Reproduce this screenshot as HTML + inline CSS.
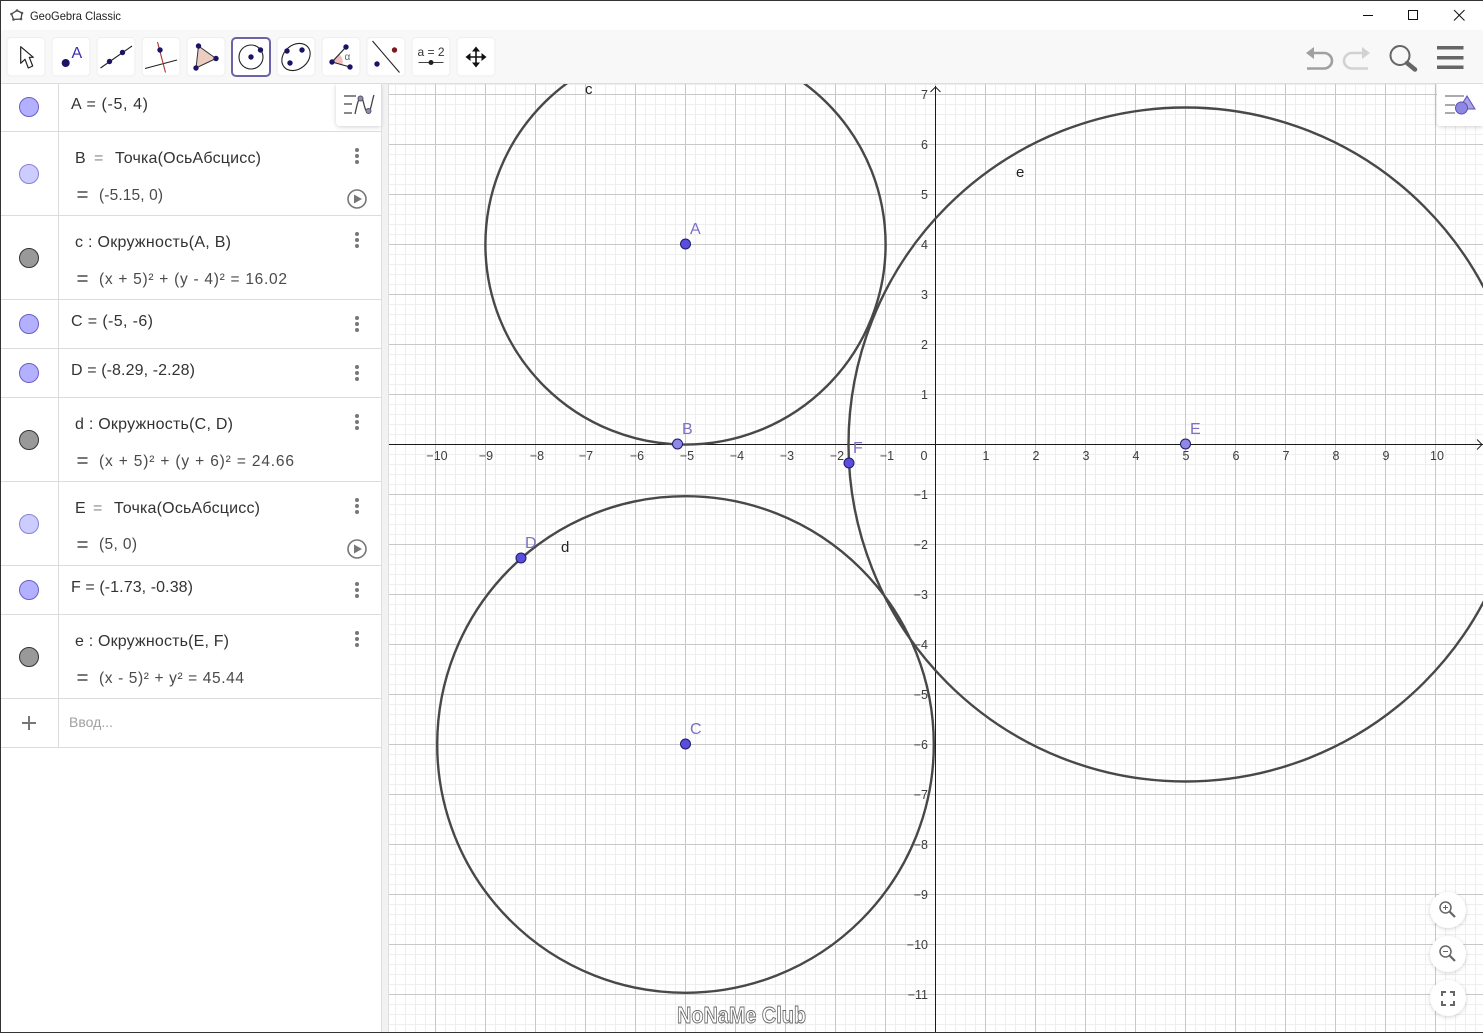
<!DOCTYPE html>
<html><head><meta charset="utf-8"><title>GeoGebra Classic</title>
<style>
html,body{margin:0;padding:0;background:#fff;width:1483px;height:1033px;overflow:hidden}
svg{display:block;font-family:"Liberation Sans","Noto Sans CJK SC",sans-serif}
.ax text{font-size:12.5px;fill:#3c3c3c}
.xl text{text-anchor:middle}
.yl text{text-anchor:end}
.pl text{font-size:16px;fill:#7a70c4}
.ol text{font-size:15px;fill:#222}
.t1 text{font-size:16px;fill:#333}
.t2 text{font-size:15.5px;fill:#4a4a4a}
.eq rect{fill:#777}
.k circle{fill:#777}
.pt circle{fill:#5a4de0;stroke:#1f1a66;stroke-width:1}
.tb rect{fill:#fff;stroke:#eeeeee;stroke-width:1}
.d{fill:#1a1464}
</style></head><body>
<svg width="1483" height="1033" viewBox="0 0 1483 1033" xmlns="http://www.w3.org/2000/svg">
<defs>
<pattern id="mi" patternUnits="userSpaceOnUse" x="5" y="4" width="10" height="10"><rect width="1" height="10" fill="#eeeeee"/><rect width="10" height="1" fill="#eeeeee"/></pattern>
<pattern id="ma" patternUnits="userSpaceOnUse" x="35" y="44" width="50" height="50"><rect width="1" height="50" fill="#c8c8c8"/><rect width="50" height="1" fill="#c8c8c8"/></pattern>
<filter id="sh" x="-30%" y="-30%" width="160%" height="160%"><feDropShadow dx="0" dy="1" stdDeviation="2" flood-color="#000" flood-opacity=".18"/></filter>
</defs>
<rect width="1483" height="1033" fill="#fff"/>
<!-- graphics -->
<rect x="389" y="84" width="1094" height="949" fill="url(#mi)"/>
<rect x="389" y="84" width="1094" height="949" fill="url(#ma)"/>
<rect x="389" y="444" width="1094" height="1" fill="#1a1a1a"/>
<rect x="935" y="86" width="1" height="947" fill="#1a1a1a"/>
<path d="M930.500 92L935.500 87L940.500 92" fill="none" stroke="#222" stroke-width="1"/>
<path d="M1477 439.500L1482 444.500L1477 449.500" fill="none" stroke="#222" stroke-width="1"/>
<g class="ax xl">
<text x="437" y="460">−10</text><text x="486" y="460">−9</text><text x="537" y="460">−8</text><text x="586" y="460">−7</text><text x="637" y="460">−6</text><text x="687" y="460">−5</text><text x="737" y="460">−4</text><text x="787" y="460">−3</text><text x="837" y="460">−2</text><text x="887" y="460">−1</text><text x="924" y="460">0</text><text x="986" y="460">1</text><text x="1036" y="460">2</text><text x="1086" y="460">3</text><text x="1136" y="460">4</text><text x="1186" y="460">5</text><text x="1236" y="460">6</text><text x="1286" y="460">7</text><text x="1336" y="460">8</text><text x="1386" y="460">9</text><text x="1437" y="460">10</text>
</g>
<g class="ax yl">
<text x="928" y="99">7</text><text x="928" y="149">6</text><text x="928" y="199">5</text><text x="928" y="249">4</text><text x="928" y="299">3</text><text x="928" y="349">2</text><text x="928" y="399">1</text><text x="928" y="499">−1</text><text x="928" y="549">−2</text><text x="928" y="599">−3</text><text x="928" y="649">−4</text><text x="928" y="699">−5</text><text x="928" y="749">−6</text><text x="928" y="799">−7</text><text x="928" y="849">−8</text><text x="928" y="899">−9</text><text x="928" y="949">−10</text><text x="928" y="999">−11</text>
</g>
<svg x="389" y="84" width="1094" height="949" viewBox="389 84 1094 949">
<g fill="none" stroke="#484848" stroke-width="2.400">
<circle cx="685.500" cy="244.500" r="200.100"/>
<circle cx="685.500" cy="744.500" r="248.300"/>
<circle cx="1185.500" cy="444.500" r="337"/>
</g></svg>
<g class="ol"><text x="585" y="94">c</text><text x="1016" y="177">e</text><text x="561" y="552">d</text></g>
<g class="pl"><text x="690" y="234">A</text><text x="682" y="434">B</text><text x="690" y="734">C</text><text x="525" y="548">D</text><text x="1190" y="434">E</text><text x="853" y="453">F</text></g>
<g class="pt">
<circle cx="685.500" cy="244" r="5"/><circle cx="677.500" cy="444" r="5" style="fill:#8f88e8"/><circle cx="685.500" cy="744" r="5"/><circle cx="521" cy="558" r="5"/><circle cx="1185.500" cy="444" r="5" style="fill:#8f88e8"/><circle cx="849" cy="463" r="5"/>
</g>
<!-- watermark -->
<text x="677" y="1023" font-size="23" font-weight="bold" fill="#fff" stroke="#666" stroke-width=".9" textLength="129" lengthAdjust="spacingAndGlyphs">NoNaMe Club</text>
<!-- zoom buttons -->
<g filter="url(#sh)" fill="#fff"><circle cx="1448" cy="910" r="18"/><circle cx="1448" cy="954" r="18"/><circle cx="1448" cy="998" r="18"/></g>
<g fill="none" stroke="#666" stroke-width="1.500">
<circle cx="1445.500" cy="907.500" r="5.500"/><path d="M1449.500 911.500L1455 917" stroke-width="2.200"/><path d="M1443 907.500h5M1445.500 905v5" stroke-width="1"/>
<circle cx="1445.500" cy="951.500" r="5.500"/><path d="M1449.500 955.500L1455 961" stroke-width="2.200"/><path d="M1443 951.500h5" stroke-width="1"/>
<path d="M1442 996v-4h4M1450 992h4v4M1454 1001v4h-4M1446 1005h-4v-4" stroke-width="2"/>
</g>
<!-- graphics stylebar -->
<path d="M1437 84h46v42h-42a4 4 0 0 1-4-4z" fill="#fff" filter="url(#sh)"/>
<g fill="#aaa"><rect x="1445" y="95" width="19" height="2"/><rect x="1445" y="104" width="10" height="2"/><rect x="1445" y="112" width="10" height="2"/></g>
<path d="M1467 96L1475 109H1459Z" fill="#a9a3e6" stroke="#5b50b8"/>
<circle cx="1461.500" cy="108" r="6" fill="#8f88e0" stroke="#5b50b8"/>
<!-- splitter -->
<rect x="382" y="84" width="6" height="949" fill="#f2f2f2"/>
<rect x="388" y="84" width="1" height="949" fill="#dedede"/>
<rect x="381" y="84" width="1" height="949" fill="#dedede"/>
<!-- algebra rows -->
<g fill="#dcdcdc">
<rect x="1" y="131" width="380" height="1"/><rect x="1" y="215" width="380" height="1"/><rect x="1" y="299" width="380" height="1"/><rect x="1" y="348" width="380" height="1"/><rect x="1" y="397" width="380" height="1"/><rect x="1" y="481" width="380" height="1"/><rect x="1" y="565" width="380" height="1"/><rect x="1" y="614" width="380" height="1"/><rect x="1" y="698" width="380" height="1"/><rect x="1" y="747" width="380" height="1"/>
<rect x="58" y="84" width="1" height="664"/>
</g>
<g stroke-width="1">
<circle cx="29" cy="107" r="9.500" fill="#b3b0ff" stroke="#6a60c8"/>
<circle cx="29" cy="174" r="9.500" fill="#ccccff" stroke="#8a80d8"/>
<circle cx="29" cy="258" r="9.500" fill="#999" stroke="#333"/>
<circle cx="29" cy="324" r="9.500" fill="#b3b0ff" stroke="#6a60c8"/>
<circle cx="29" cy="373" r="9.500" fill="#b3b0ff" stroke="#6a60c8"/>
<circle cx="29" cy="440" r="9.500" fill="#999" stroke="#333"/>
<circle cx="29" cy="524" r="9.500" fill="#ccccff" stroke="#8a80d8"/>
<circle cx="29" cy="590" r="9.500" fill="#b3b0ff" stroke="#6a60c8"/>
<circle cx="29" cy="657" r="9.500" fill="#999" stroke="#333"/>
</g>
<path d="M22 723h14M29 716v14" stroke="#777" stroke-width="2" fill="none"/>
<g class="t1">
<text x="71" y="109" textLength="77">A = (-5, 4)</text>
<text x="75" y="163">B</text><text x="94" y="163" style="fill:#888">=</text><text x="115" y="163" textLength="146">Точка(ОсьАбсцисс)</text>
<text x="75" y="247" textLength="156">c : Окружность(A, B)</text>
<text x="71" y="326" textLength="82">C = (-5, -6)</text>
<text x="71" y="375" textLength="124">D = (-8.29, -2.28)</text>
<text x="75" y="429" textLength="158">d : Окружность(C, D)</text>
<text x="75" y="513">E</text><text x="93" y="513" style="fill:#888">=</text><text x="114" y="513" textLength="146">Точка(ОсьАбсцисс)</text>
<text x="71" y="592" textLength="122">F = (-1.73, -0.38)</text>
<text x="75" y="646" textLength="154">e : Окружность(E, F)</text>
</g>
<g class="t2">
<text x="99" y="200" textLength="64">(-5.15, 0)</text>
<text x="99" y="284" textLength="188">(x + 5)² + (y - 4)² = 16.02</text>
<text x="99" y="466" textLength="195">(x + 5)² + (y + 6)² = 24.66</text>
<text x="99" y="549" textLength="38">(5, 0)</text>
<text x="99" y="683" textLength="145">(x - 5)² + y² = 45.44</text>
</g>
<text x="69" y="727" font-size="14" fill="#a0a0a0" textLength="44">Ввод...</text>
<g class="eq">
<rect x="77.500" y="191" width="10" height="2"/><rect x="77.500" y="196" width="10" height="2"/>
<rect x="77.500" y="275" width="10" height="2"/><rect x="77.500" y="280" width="10" height="2"/>
<rect x="77.500" y="457" width="10" height="2"/><rect x="77.500" y="462" width="10" height="2"/>
<rect x="77.500" y="541" width="10" height="2"/><rect x="77.500" y="546" width="10" height="2"/>
<rect x="77.500" y="674" width="10" height="2"/><rect x="77.500" y="679" width="10" height="2"/>
</g>
<g class="k">
<circle cx="357" cy="150" r="2"/><circle cx="357" cy="156" r="2"/><circle cx="357" cy="162" r="2"/>
<circle cx="357" cy="234" r="2"/><circle cx="357" cy="240" r="2"/><circle cx="357" cy="246" r="2"/>
<circle cx="357" cy="318" r="2"/><circle cx="357" cy="324" r="2"/><circle cx="357" cy="330" r="2"/>
<circle cx="357" cy="367" r="2"/><circle cx="357" cy="373" r="2"/><circle cx="357" cy="379" r="2"/>
<circle cx="357" cy="416" r="2"/><circle cx="357" cy="422" r="2"/><circle cx="357" cy="428" r="2"/>
<circle cx="357" cy="500" r="2"/><circle cx="357" cy="506" r="2"/><circle cx="357" cy="512" r="2"/>
<circle cx="357" cy="584" r="2"/><circle cx="357" cy="590" r="2"/><circle cx="357" cy="596" r="2"/>
<circle cx="357" cy="633" r="2"/><circle cx="357" cy="639" r="2"/><circle cx="357" cy="645" r="2"/>
</g>
<g fill="none" stroke="#777" stroke-width="1.600"><circle cx="357" cy="199" r="9"/><circle cx="357" cy="549" r="9"/></g>
<path d="M354 194.500L362 199L354 203.500ZM354 544.500L362 549L354 553.500Z" fill="#777"/>
<!-- algebra stylebar -->
<path d="M336 84h45v42h-41a4 4 0 0 1-4-4z" fill="#fff" filter="url(#sh)"/>
<rect x="381" y="84" width="1" height="48" fill="#dedede"/>
<g fill="#888"><rect x="344" y="95" width="12" height="2"/><rect x="344" y="103" width="8" height="2"/><rect x="344" y="112" width="8" height="2"/></g>
<path d="M355 114C358 100 359 98 361 98C364 98 364 112 368 112C371 112 372 100 374 95" fill="none" stroke="#444" stroke-width="1.300"/>
<circle cx="360.500" cy="98.500" r="2.500" fill="#8f88c8" stroke="#555"/><circle cx="368.500" cy="111" r="2.500" fill="#8f88c8" stroke="#555"/>
<!-- toolbar -->
<rect x="0" y="0" width="1483" height="30" fill="#fff"/>
<rect x="0" y="30" width="1483" height="53" fill="#f8f8f8"/>
<rect x="0" y="83" width="1483" height="1" fill="#dddddd"/>
<g class="tb">
<rect x="7" y="37.500" width="38" height="38.500" rx="4"/><rect x="52" y="37.500" width="38" height="38.500" rx="4"/><rect x="97" y="37.500" width="38" height="38.500" rx="4"/><rect x="142" y="37.500" width="38" height="38.500" rx="4"/><rect x="187" y="37.500" width="38" height="38.500" rx="4"/>
<rect x="277" y="37.500" width="38" height="38.500" rx="4"/><rect x="322" y="37.500" width="38" height="38.500" rx="4"/><rect x="367" y="37.500" width="38" height="38.500" rx="4"/><rect x="412" y="37.500" width="38" height="38.500" rx="4"/><rect x="457" y="37.500" width="38" height="38.500" rx="4"/>
</g>
<rect x="232" y="38" width="38" height="38" rx="4" fill="#fff" stroke="#6a63a8" stroke-width="2"/>
<!-- icons -->
<path d="M20.700 46.700V63.300L25 59.300L28.300 68L32.700 66L29.300 57.300H33.300Z" fill="#fff" stroke="#222" stroke-width="1.200" stroke-linejoin="round"/>
<circle class="d" cx="65.700" cy="63" r="4"/>
<text x="71.500" y="58" font-size="16" fill="#3a2fb0">A</text>
<path d="M100.500 68L132 46" stroke="#222" stroke-width="1.100"/>
<circle class="d" cx="109.500" cy="61.500" r="2.700"/><circle class="d" cx="122.500" cy="52.500" r="2.700"/>
<path d="M145 68.500L177 60" stroke="#222" stroke-width="1.100"/>
<path d="M157.500 42L165.500 72.500" stroke="#a33" stroke-width="1.100"/>
<circle class="d" cx="160" cy="50" r="2.700"/>
<path d="M198.500 46L216 58.500L196 68Z" fill="#eccdc2" stroke="#333" stroke-width="1"/>
<circle class="d" cx="198.500" cy="46" r="2.700"/><circle class="d" cx="216" cy="58.500" r="2.700"/><circle class="d" cx="196" cy="68" r="2.700"/>
<circle cx="251" cy="57" r="12" fill="none" stroke="#222" stroke-width="1.100"/>
<circle class="d" cx="251" cy="57" r="2.700"/><circle class="d" cx="260.500" cy="50" r="2.700"/>
<ellipse cx="296" cy="57" rx="15.500" ry="12" transform="rotate(-40 296 57)" fill="none" stroke="#222" stroke-width="1.100"/>
<circle class="d" cx="287" cy="51" r="2.700"/><circle class="d" cx="302" cy="50" r="2.700"/><circle class="d" cx="290" cy="63" r="2.700"/>
<path d="M332 62L339.500 54.500A11 11 0 0 1 342.500 64.500Z" fill="#f2bcbc"/>
<path d="M346 47L332 62L350 67" fill="none" stroke="#222" stroke-width="1.100"/>
<circle class="d" cx="346" cy="47" r="2.700"/><circle class="d" cx="332" cy="62" r="2.700"/><circle class="d" cx="350" cy="67" r="2.700"/>
<text x="344.500" y="60" font-size="10" fill="#666">α</text>
<path d="M372.500 41L399.500 72.500" stroke="#222" stroke-width="1.100"/>
<circle cx="394.500" cy="50" r="2.700" fill="#7a1a22"/><circle class="d" cx="377" cy="64" r="2.700"/>
<text x="431" y="56" font-size="12" fill="#333" text-anchor="middle">a = 2</text>
<path d="M418.500 62.500H443.500" stroke="#444" stroke-width="1.100"/><circle cx="431" cy="62.500" r="2.500" fill="#222"/>
<path d="M476 49V65M468 57H484" stroke="#111" stroke-width="1.600"/>
<path d="M476 46.500L480 51.500H472ZM476 67.500L480 62.500H472ZM465.500 57L470.500 53V61ZM486.500 57L481.500 53V61Z" fill="#111"/>
<!-- right icons -->
<g fill="none" stroke-width="2.600">
<path d="M1308 53H1324A8 8 0 0 1 1332 61A8 8 0 0 1 1324 68.500H1307" stroke="#a0a0a0"/>
<path d="M1368 53H1352A8 8 0 0 0 1344 61A8 8 0 0 0 1352 68.500H1368" stroke="#d2d2d2"/>
</g>
<path d="M1306 53L1314 47V59Z" fill="#a0a0a0"/>
<path d="M1370 53L1362 47V59Z" fill="#d2d2d2"/>
<circle cx="1400" cy="55.500" r="9.500" fill="none" stroke="#666" stroke-width="2"/>
<path d="M1407 63L1415 69.500" stroke="#666" stroke-width="4.500" stroke-linecap="round"/>
<g fill="#666"><rect x="1437" y="46" width="26.500" height="3.500"/><rect x="1437" y="56" width="26.500" height="3.500"/><rect x="1437" y="65.500" width="26.500" height="3.500"/></g>
<!-- title bar -->
<path d="M17 10.500L22 13L21 19L13.500 19.500L11.500 14Z" fill="none" stroke="#444" stroke-width="1.300"/>
<g fill="#555"><circle cx="17" cy="10.500" r="1.300"/><circle cx="22" cy="13" r="1.300"/><circle cx="21" cy="19" r="1.300"/><circle cx="13.500" cy="19.500" r="1.300"/><circle cx="11.500" cy="14" r="1.300"/></g>
<text x="30" y="20" font-size="12" fill="#222" textLength="91" lengthAdjust="spacingAndGlyphs">GeoGebra Classic</text>
<rect x="1363" y="15" width="10" height="1" fill="#111"/>
<rect x="1408.500" y="10.500" width="9" height="9" fill="none" stroke="#111"/>
<path d="M1454 10L1464.500 20.500M1464.500 10L1454 20.500" stroke="#111" stroke-width="1"/>
<!-- window border -->
<rect x="0" y="0" width="1483" height="1" fill="#333"/>
<rect x="0" y="0" width="1" height="1033" fill="#333"/>
<rect x="0" y="1032" width="1483" height="1" fill="#333"/>
</svg>
</body></html>
